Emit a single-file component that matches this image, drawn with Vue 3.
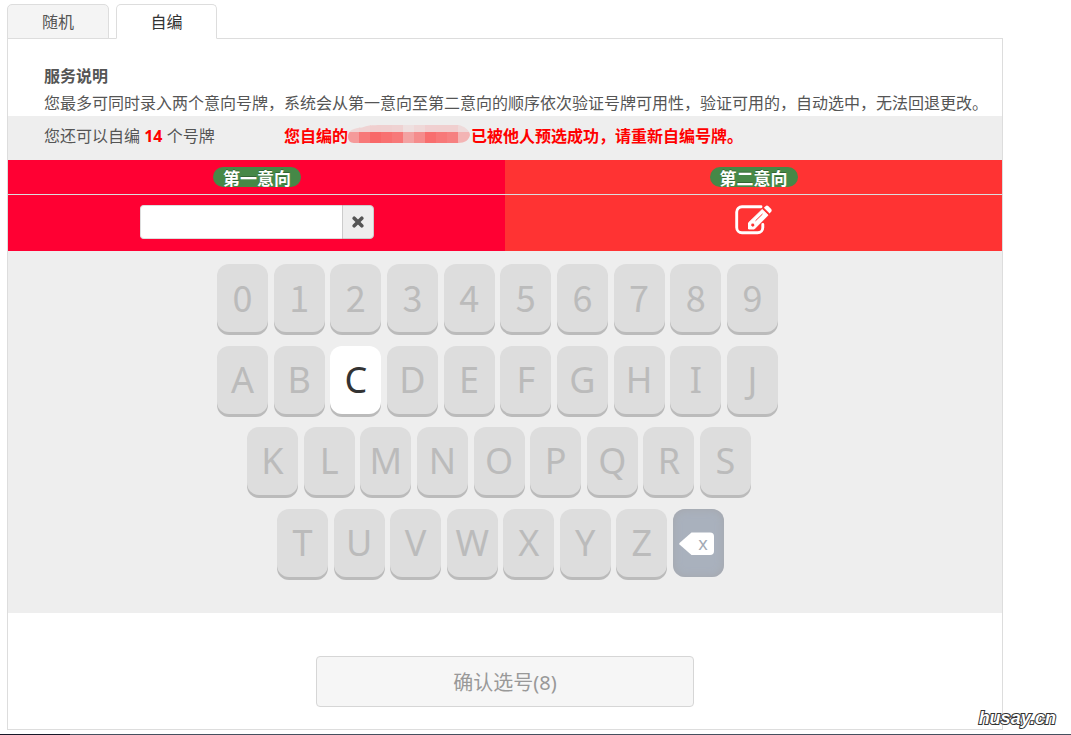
<script setup>
import { ref } from 'vue'

const plate = ref('')
const tabs = ['随机', '自编']
const active = ref('自编')
const enabled = ['C']
const rows = [
  { name: 'digits', keys: [...'0123456789'] },
  { name: 'upper', keys: [...'ABCDEFGHIJ'] },
  { name: 'middle', keys: [...'KLMNOPQRS'] },
  { name: 'lower', keys: [...'TUVWXYZ'], erase: true },
]
const topBlocks = ['#efd6d6', '#efd3d3', '#f0cfcf', '#efd0d0', '#efd2d2', '#eee0e0', '#efd8d8', '#f0cfd0', '#f0cfcf', '#f0cfcf', '#eedada']
const lowBlocks = ['#f59a9a', '#f77878', '#f86868', '#f87070', '#f77878', '#f3a2a2', '#f58c8c', '#f86e6e', '#f77878', '#f68080', '#f3b4b4']

function press(key) {
  plate.value += key
}
</script>

<template>
  <div class="page">
    <nav class="tabs">
      <button v-for="t in tabs" :key="t" type="button" class="tab" :class="{ on: t === active }" @click="active = t">{{ t }}</button>
    </nav>

    <main class="panel">
      <section class="intro">
        <h2>服务说明</h2>
        <p>您最多可同时录入两个意向号牌，系统会从第一意向至第二意向的顺序依次验证号牌可用性，验证可用的，自动选中，无法回退更改。</p>
      </section>

      <section class="status">
        <span class="remain">您还可以自编 <b>14</b> 个号牌</span>
        <strong class="alert">
          <span>您自编的</span>
          <svg class="mask" width="123" height="18" viewBox="0 0 123 18" aria-hidden="true">
            <defs>
              <clipPath id="blob"><path d="M0 12C0 5 6 3 14 2.500C20 0 28 0 36 0H110C117 1 122 6 122 10C121 15 117 18 110 18H6C2 18 0 15 0 12Z" /></clipPath>
            </defs>
            <g clip-path="url(#blob)">
              <rect v-for="(c, i) in topBlocks" :key="'t' + i" :x="i * 11" y="0" width="12" height="7" :fill="c" />
              <rect v-for="(c, i) in lowBlocks" :key="'l' + i" :x="i * 11" y="7" width="12" height="11" :fill="c" />
            </g>
          </svg>
          <span>已被他人预选成功，请重新自编号牌。</span>
        </strong>
      </section>

      <section class="choices">
        <div class="choice first">
          <div class="head"><label class="badge" for="plate">第一意向</label></div>
          <div class="body">
            <div class="field">
              <input id="plate" v-model="plate" type="text" />
              <button type="button" class="clear" aria-label="清除" @click="plate = ''">
                <svg width="12" height="12" viewBox="0 0 12 12"><path d="M2.200 2.200L9.800 9.800M9.800 2.200L2.200 9.800" stroke="#555" stroke-width="3.600" stroke-linecap="round" /></svg>
              </button>
            </div>
          </div>
        </div>
        <div class="choice second">
          <div class="head"><span class="badge">第二意向</span></div>
          <div class="body">
            <button type="button" class="edit" aria-label="编辑">
              <svg width="38" height="30" viewBox="0 0 38 30" fill="none">
                <path d="M26 1.700H7A5.300 5.300 0 0 0 1.700 7V22.500A5.300 5.300 0 0 0 7 27.800H22.500A5.300 5.300 0 0 0 27.800 22.500V19.500" stroke="#fff" stroke-width="2.900" stroke-linecap="round" />
                <path d="M13.500 24V17.800L27.200 4.500L33 10.200L19.300 24Z" fill="#fff" stroke="#fff" stroke-linejoin="round" />
                <path d="M28.900 2.700L30.800 0.900Q32 0 33.200 1.100L36.200 4.100Q37.300 5.400 36.300 6.600L34.600 8.400Z" fill="#fff" />
                <path d="M16.800 18.500L19 18.700L19.300 21L17.500 21.800L16 20.300Z" fill="#f33" />
                <path d="M20.500 15.800L27.500 9" stroke="#f33" />
              </svg>
            </button>
          </div>
        </div>
      </section>

      <section class="pad">
        <div class="keyboard">
          <div v-for="row in rows" :key="row.name" class="row" :class="row.name">
            <button v-for="k in row.keys" :key="k" type="button" class="key" :class="{ live: enabled.includes(k) }" :disabled="!enabled.includes(k)" @click="press(k)">{{ k }}</button>
            <button v-if="row.erase" type="button" class="key erase" aria-label="退格" @click="plate = plate.slice(0, -1)">
              <svg width="36" height="24" viewBox="0 0 36 24">
                <path d="M0.500 11L12.500 0.500H31Q35 0.500 35 4.500V19Q35 23 31 23H12.500L0.500 12.500Q0 11.700 0.500 11Z" fill="#fff" />
                <text x="24" y="18" text-anchor="middle" class="x">x</text>
              </svg>
            </button>
          </div>
        </div>
      </section>

      <footer class="actions">
        <button type="button" class="confirm" disabled>确认选号(8)</button>
      </footer>
    </main>

    <div class="taskbar"></div>
    <span class="watermark">husay.cn</span>
  </div>
</template>

<style>
body {
  background: #fff;
}
</style>

<style scoped>
.page {
  position: relative;
  box-sizing: border-box;
  min-height: 100vh;
  display: flex;
  flex-direction: column;
  padding-top: 4px;
  font-family: "Noto Sans", "Noto Sans CJK SC", sans-serif;
  font-size: 16px;
  color: #555;
}
button,
input {
  box-sizing: border-box;
  margin: 0;
  padding: 0;
  font: inherit;
}
.tabs {
  display: flex;
  gap: 7px;
  padding-left: 7px;
  margin-bottom: -1px;
  z-index: 1;
}
.tab {
  width: 102px;
  height: 35px;
  padding-top: 2px;
  border: 1px solid #ddd;
  border-radius: 5px 5px 0 0;
  background: #f4f4f4;
  color: #555;
  line-height: 31px;
}
.tab.on {
  width: 101px;
  border-bottom-color: #fff;
  background: #fff;
  color: #333;
}
.panel {
  margin: 0 68px 4px 7px;
  border: 1px solid #ddd;
}
.intro {
  padding: 24px 0 0 36px;
}
.intro h2,
.intro p {
  margin: 0;
  font-size: 16px;
  line-height: 26px;
  white-space: nowrap;
}
.intro p {
  padding-top: 1px;
}
.status {
  display: flex;
  height: 44px;
  padding-left: 36px;
  background: #eee;
  line-height: 41px;
  white-space: nowrap;
}
.remain {
  flex: 0 0 240px;
}
.remain b,
.alert {
  color: #f00;
}
.alert {
  display: flex;
  font-weight: bold;
}
.mask {
  margin-top: 9px;
}
.choices {
  display: grid;
  grid-template-columns: 1fr 1fr;
}
.first {
  background: #f03;
}
.second {
  background: #f33;
}
.head {
  display: flex;
  justify-content: center;
  padding: 7px 0;
  border-bottom: 1px solid #ddd;
}
.first .head,
.first .body {
  padding-left: 1px;
}
.badge {
  height: 20px;
  padding: 0 10px;
  border-radius: 10px;
  background: #468847;
  color: #fff;
  font-size: 17px;
  font-weight: bold;
  line-height: 23px;
  text-shadow: 0 -1px 0 rgba(0, 0, 0, 0.25);
}
.body {
  display: flex;
  justify-content: center;
  height: 56px;
}
.field {
  display: flex;
  width: 234px;
  height: 34px;
  margin-top: 10px;
}
.field input {
  flex: 1;
  min-width: 0;
  padding: 0 8px;
  border: 1px solid #ddd;
  border-right: 0;
  border-radius: 4px 0 0 4px;
  background: #fff;
}
.clear {
  display: flex;
  align-items: center;
  justify-content: center;
  width: 32px;
  border: 1px solid #ccc;
  border-radius: 0 4px 4px 0;
  background: #eee;
}
.edit {
  align-self: flex-start;
  height: 30px;
  margin-top: 10px;
  border: 0;
  background: none;
}
.edit svg {
  display: block;
}
.pad {
  display: flex;
  justify-content: center;
  padding: 13px 15px 33px 0;
  background: #eee;
}
.keyboard {
  display: flex;
  flex-direction: column;
  justify-content: space-between;
  width: 561px;
  height: 316px;
}
.row {
  display: flex;
  justify-content: space-between;
}
.middle {
  width: 504px;
  margin-left: 30px;
}
.lower {
  width: 447px;
  margin-left: 60px;
}
.key {
  width: 51px;
  height: 68px;
  margin-bottom: 3px;
  border: 0;
  border-radius: 12px;
  background: #ddd;
  box-shadow: 0 3px 0 #bbb;
  color: #bbb;
  font-size: 36px;
  line-height: 68px;
}
.digits .key {
  padding-bottom: 4px;
  font-family: "Noto Sans CJK SC", sans-serif;
  line-height: 64px;
}
.key.live {
  background: #fff;
  color: #333;
}
.key.erase {
  display: flex;
  align-items: center;
  justify-content: center;
  padding: 2px 2px 0 0;
  background: #a9b1bd;
  box-shadow: inset 0 0 9px #a5a7ac;
}
.x {
  fill: #a3aab5;
  font-size: 18px;
}
.actions {
  display: flex;
  justify-content: center;
  padding: 43px 0 22px;
}
.confirm {
  width: 38%;
  height: 51px;
  border: 1px solid #d6d6d6;
  border-radius: 4px;
  background: #f6f6f6;
  color: #999;
  font-size: 20px;
}
.taskbar {
  height: 1px;
  margin-top: auto;
  background: linear-gradient(90deg, #181828 0 70px, #46505f 70px);
}
.watermark {
  position: absolute;
  right: 15px;
  bottom: 5px;
  color: #fff;
  font-family: "Liberation Sans", sans-serif;
  font-size: 18px;
  font-style: italic;
  font-weight: bold;
  line-height: 24px;
  -webkit-text-stroke: 2px #333;
  paint-order: stroke fill;
}
</style>
